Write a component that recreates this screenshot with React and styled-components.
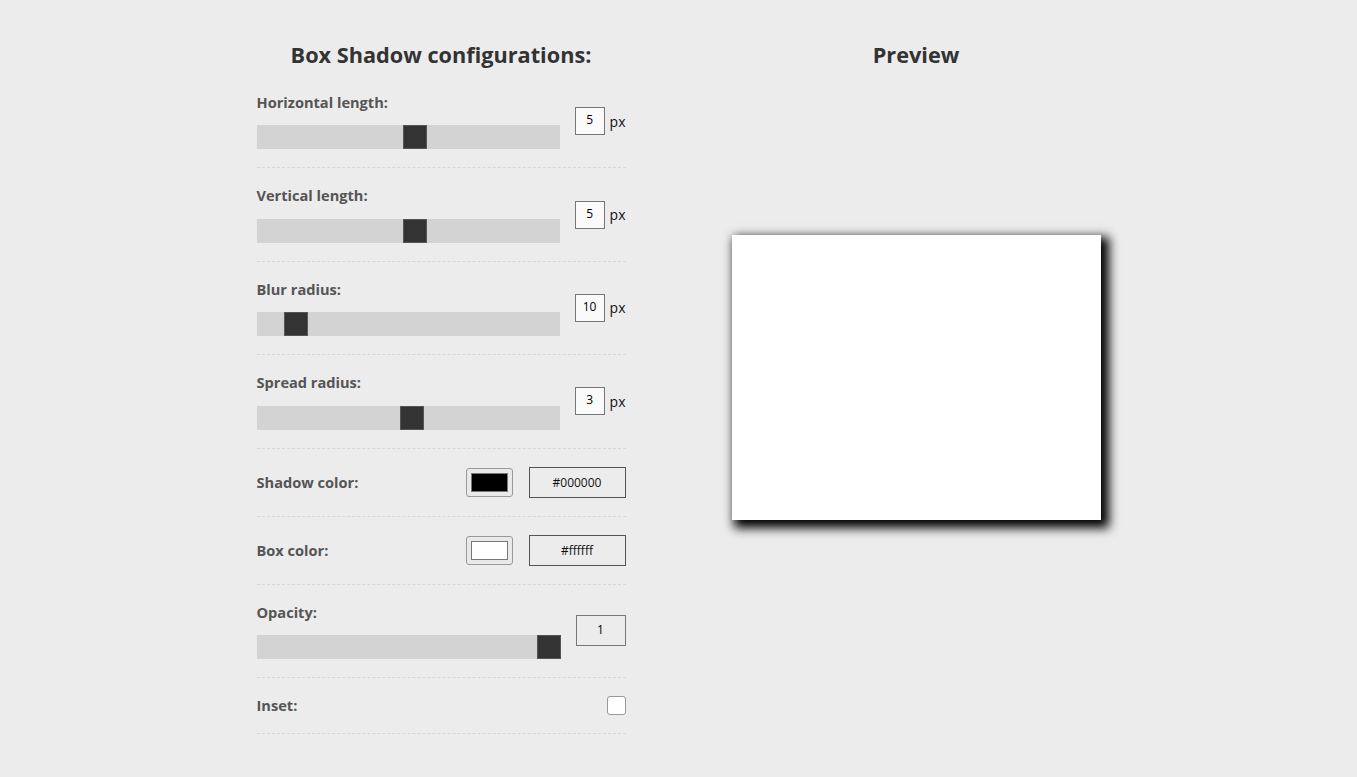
import React from 'react'
import styled, { createGlobalStyle } from 'styled-components'

const GlobalStyle = createGlobalStyle`
  html, body {
    margin: 0;
    padding: 0;
    background: #ececec;
    font-family: "Open Sans", "Noto Sans", sans-serif;
  }
`

const Page = styled.div`
  display: flex;
  justify-content: center;
  gap: 106px;
  padding-top: 40px;
`

const Column = styled.section`
  width: 369px;
  display: flex;
  flex-direction: column;
`

const Title = styled.h2`
  margin: 0 0 5px;
  height: 30px;
  line-height: 30px;
  text-align: center;
  font-size: 21.7px;
  font-weight: 700;
  color: #333;
`

const Row = styled.div`
  display: flex;
  align-items: center;
  justify-content: space-between;
  padding: 18px 0;
  border-bottom: 1px dashed #d6d6d6;
`

const Control = styled.div`
  display: flex;
  flex-direction: column;
  gap: 14.4px;
`

const Label = styled.label`
  font-size: 14.6px;
  line-height: 18px;
  font-weight: 700;
  color: #555;
`

const Range = styled.input`
  -webkit-appearance: none;
  appearance: none;
  margin: 0;
  width: ${ ({ wide }) => wide ? '304px' : '303px' };
  height: 24px;
  background: #d3d3d3;
  outline: none;

  &::-webkit-slider-thumb {
    -webkit-appearance: none;
    appearance: none;
    width: 24px;
    height: 24px;
    background: #333;
    border: 1px solid #555;
    box-sizing: border-box;
    cursor: pointer;
  }
`

const Unit = styled.div`
  display: flex;
  align-items: center;
  gap: 5px;
  font-size: 14px;
  color: #111;
`

const NumberBox = styled.input`
  box-sizing: border-box;
  width: ${ ({ w }) => w || 30 }px;
  height: ${ ({ h }) => h || 28 }px;
  border: 1px solid #777;
  background: ${ ({ plain }) => plain ? '#ececec' : '#fafafa' };
  font-family: "Open Sans", sans-serif;
  font-size: 12px;
  color: #000;
  text-align: center;
  padding: 0 0 3px;
  margin: 0;
  outline: none;
`

const ColorGroup = styled.div`
  display: flex;
  align-items: center;
  gap: 16px;
`

const Swatch = styled.div`
  box-sizing: border-box;
  width: 47px;
  height: 29px;
  padding: 4px 4px;
  border: 1px solid #999;
  border-radius: 3px;
  background: #e9e9e9;
  display: flex;
`

const SwatchFill = styled.div`
  flex: 1;
  background: ${ ({ color }) => color };
  border: 1px solid #777;
`

const HexBox = styled.input`
  box-sizing: border-box;
  width: 97px;
  height: 31px;
  border: 1px solid #555;
  background: #ececec;
  font-family: "Open Sans", sans-serif;
  font-size: 12px;
  color: #111;
  text-align: center;
  padding: 0;
  margin: 0;
`

const Check = styled.span`
  box-sizing: border-box;
  width: 19px;
  height: 19px;
  border: 1px solid #999;
  border-radius: 3px;
  background: #fff;
`

const PreviewArea = styled.div`
  display: flex;
  justify-content: center;
  padding-top: 160px;
`

const PreviewBox = styled.div`
  width: 369px;
  height: 285px;
  background: ${ ({ color }) => color };
  box-shadow: 5px 5px 10px 3px rgba(0, 0, 0, 1);
`

const sliders = [
    { label: 'Horizontal length:', min: -100, max: 100, value: 5 },
    { label: 'Vertical length:', min: -100, max: 100, value: 5 },
    { label: 'Blur radius:', min: 0, max: 100, value: 10 },
    { label: 'Spread radius:', min: -100, max: 100, value: 3 },
]

const ColorRow = ({ label, color }) => (
    <Row>
        <Label>{label}</Label>
        <ColorGroup>
            <Swatch><SwatchFill color={color} /></Swatch>
            <HexBox readOnly value={color} />
        </ColorGroup>
    </Row>
)

export default function App() {
    return (
        <>
            <GlobalStyle />
            <Page>
                <Column>
                    <Title>Box Shadow configurations:</Title>
                    {sliders.map(s => (
                        <Row key={s.label}>
                            <Control>
                                <Label>{s.label}</Label>
                                <Range type='range' min={s.min} max={s.max} defaultValue={s.value} />
                            </Control>
                            <Unit>
                                <NumberBox readOnly value={s.value} />
                                px
                            </Unit>
                        </Row>
                    ))}
                    <ColorRow label='Shadow color:' color='#000000' />
                    <ColorRow label='Box color:' color='#ffffff' />
                    <Row>
                        <Control>
                            <Label>Opacity:</Label>
                            <Range wide type='range' min={0} max={1} step={0.01} defaultValue={1} />
                        </Control>
                        <NumberBox plain w={50} h={31} readOnly value={1} />
                    </Row>
                    <Row>
                        <Label>Inset:</Label>
                        <Check />
                    </Row>
                </Column>
                <Column>
                    <Title>Preview</Title>
                    <PreviewArea>
                        <PreviewBox color='#ffffff' />
                    </PreviewArea>
                </Column>
            </Page>
        </>
    )
}
